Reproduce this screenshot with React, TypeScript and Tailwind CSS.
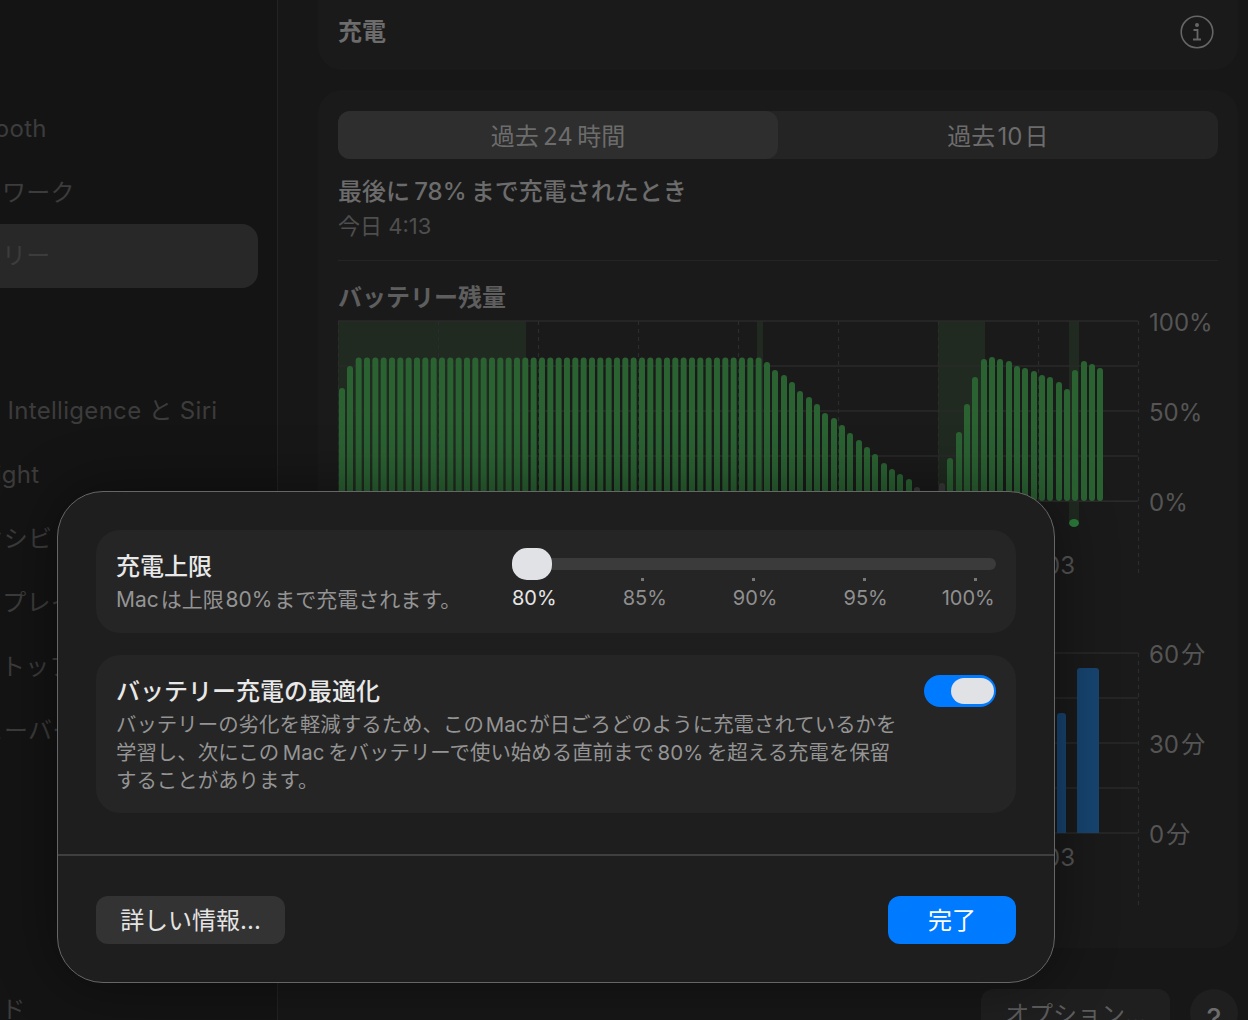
import React from "react";

const font = { fontFamily: '"Inter","Noto Sans CJK JP","Noto Sans",sans-serif' };

const tops: [number, number, string?][] = [
  [342, 388], [350, 366],
  ...Array.from({ length: 49 }, (_, i) => [342 + (i + 2) * 8.333, 357.5] as [number, number]),
  [767, 362], [775, 370], [784, 375], [792, 382], [800, 391], [809, 397], [817, 404], [825, 413], [834, 418], [842, 425],
  [850, 433], [859, 440], [867, 447], [875, 454], [884, 463], [892, 469], [900, 474], [909, 479], [917, 487, "#3a3a3a"],
  [942, 483, "#3a3a3a"], [950, 458], [959, 432], [967, 404], [975, 377], [984, 359], [992, 357], [1000, 359], [1009, 361],
  [1017, 366], [1025, 368], [1034, 371], [1042, 375], [1050, 377], [1059, 382], [1067, 389], [1075, 370], [1084, 361], [1092, 364], [1100, 368],
];

function Grid({ ys, bottom }: { ys: number[]; bottom: number }) {
  return (
    <>
      {ys.map((y) => (
        <line key={y} x1={0} x2={800} y1={y} y2={y} stroke="#2a2a2a" strokeWidth={1.5} />
      ))}
      {[0, 100, 200, 300, 400, 500, 600, 700, 800].map((x) => (
        <line key={x} x1={x + 0.5} x2={x + 0.5} y1={1} y2={bottom} stroke="#2c2c2c" strokeWidth={1.2} strokeDasharray="4 4" />
      ))}
    </>
  );
}

function BatteryChart() {
  return (
    <svg width={802} height={258} className="block shrink-0">
      <g fill="#202a20">
        <rect x={0} y={1} width={188} height={180} />
        <rect x={419} y={1} width={6} height={180} />
        <rect x={600} y={1} width={47} height={180} />
        <rect x={731} y={1} width={10} height={200} />
      </g>
      <Grid ys={[1, 46, 91, 136, 181]} bottom={257} />
      {tops.map(([x, y, c], i) => (
        <rect key={i} x={x - 338 - 3} y={y - 320} width={6} height={501 - y} rx={3} fill={c ?? "#2a6232"} />
      ))}
      <rect x={0} y={181} width={800} height={1} fill="#2a2a2a" />
      <ellipse cx={736} cy={203} rx={5} ry={4} fill="#2a7a3a" />
      <text x={707} y={254} fontSize={24} fill="#555555">03</text>
    </svg>
  );
}

function UsageChart() {
  return (
    <svg width={802} height={256} className="block shrink-0">
      <Grid ys={[1, 46, 91, 136, 181]} bottom={255} />
      <path d="M719 181V64a3 3 0 0 1 3-3h3a3 3 0 0 1 3 3v117z" fill="#17446f" />
      <path d="M739 181V19a3 3 0 0 1 3-3h16a3 3 0 0 1 3 3v162z" fill="#17446f" />
      <text x={707} y={214} fontSize={24} fill="#555555">03</text>
    </svg>
  );
}

function Side({ t, ml, sel }: { t: string; ml: string; sel?: boolean }) {
  return (
    <div className={`flex h-[64px] w-[258px] shrink-0 items-center overflow-hidden rounded-r-[16px] ${sel ? "bg-[#282828]" : ""}`}>
      <span className={`whitespace-nowrap text-[24px] tracking-[0.3px] text-[#3c3c3c] ${ml}`}>{t}</span>
    </div>
  );
}

export default function App() {
  return (
    <div style={font} className="relative flex h-[1020px] w-[1248px] overflow-hidden bg-[#171717]">
      <aside className="flex w-[278px] shrink-0 flex-col overflow-hidden border-r border-[#232323] bg-[#141414] pt-[97px]">
        <Side t="Bluetooth" ml="ml-[-64px]" />
        <div className="-mb-[1px] shrink-0"><Side t="ネットワーク" ml="ml-[-71px]" /></div>
        <Side t="バッテリー" ml="ml-[-71px]" sel />
        <div className="mt-[91px] shrink-0"><Side t={"Apple\u2002Intelligence と Siri"} ml="ml-[-72px]" /></div>
        <Side t="Spotlight" ml="ml-[-64px]" />
        <Side t="アクセシビリティ" ml="ml-[-68px]" />
        <Side t="ディスプレイ" ml="ml-[-69px]" />
        <Side t="デスクトップとDock" ml="ml-[-72px]" />
        <Side t="メニューバー" ml="ml-[-69px]" />
        <div className="mt-[215px] shrink-0"><Side t="キーボード" ml="ml-[-96px]" /></div>
      </aside>

      <main className="flex w-[960px] flex-col pl-[40px]">
        <div className="flex h-[70px] shrink-0 items-center justify-between rounded-b-[24px] bg-[#1a1a1a] pl-[20px] pr-[24px] pb-[6px]">
          <span className="text-[24px] font-semibold text-[#6c6c6c]">充電</span>
          <svg width={34} height={34} viewBox="0 0 34 34" fill="none" className="text-[#666666]">
            <circle cx={17} cy={17} r={15.8} stroke="currentColor" strokeWidth={1.6} />
            <circle cx={17} cy={10} r={2} fill="currentColor" />
            <path d="M13.5 15h4v9M13 24.5h8" stroke="currentColor" strokeWidth={1.8} />
          </svg>
        </div>

        <section className="mt-[20px] flex h-[858px] shrink-0 flex-col overflow-hidden rounded-[24px] bg-[#1a1a1a] px-[20px] pt-[21px]">
          <div className="flex h-[48px] shrink-0 rounded-[12px] bg-[#242424] text-[24px] text-[#6c6c6c]">
            <div className="flex w-[440px] items-center justify-center rounded-[12px] bg-[#2e2e2e] pt-[3px]">{"過去\u200924\u2009時間"}</div>
            <div className="flex flex-1 items-center justify-center pt-[3px]">{"過去\u200a10\u200a日"}</div>
          </div>
          <div className="mt-[16px] text-[24px] font-medium leading-[34px] text-[#6c6c6c]">{"最後に\u200978%\u2009まで充電されたとき"}</div>
          <div className="text-[22px] leading-[34px] text-[#4e4e4e]">今日 4:13</div>
          <div className="mt-[17px] h-px w-full shrink-0 bg-[#242424]" />
          <div className="mt-[20px] text-[24px] font-bold leading-[34px] text-[#5e5e5e]">バッテリー残量</div>
          <div className="mt-[5px] flex shrink-0 gap-[9px]">
            <BatteryChart />
            <div className="text-[24px] text-[#555555]">
              <div className="-mt-[14px] h-[90px] leading-[34px]">100%</div>
              <div className="h-[90px] leading-[34px]">50%</div>
              <div className="h-[90px] leading-[34px]">0%</div>
            </div>
          </div>
          <div className="mt-[74px] flex shrink-0 gap-[9px]">
            <UsageChart />
            <div className="text-[24px] text-[#555555]">
              <div className="-mt-[14px] h-[90px] leading-[34px]">{"60\u200a分"}</div>
              <div className="h-[90px] leading-[34px]">{"30\u200a分"}</div>
              <div className="h-[90px] leading-[34px]">{"0\u200a分"}</div>
            </div>
          </div>
        </section>

        <div className="mt-[41px] flex shrink-0 justify-end gap-[20px]">
          <div className="flex h-[56px] w-[189px] justify-center rounded-[12px] bg-[#1f1f1f] pt-[8px] text-[24px] text-[#5c5c5c]">オプション...</div>
          <div className="flex h-[48px] w-[48px] items-center justify-center rounded-full bg-[#1f1f1f] pt-[12px] text-[28px] font-medium text-[#6c6c6c]">?</div>
        </div>
      </main>

      <div className="absolute left-[57px] top-[491px] flex h-[492px] w-[998px] flex-col rounded-[46px] border-[1.5px] border-[#666666] bg-[#1e1e1e] shadow-[0_0_60px_rgba(0,0,0,0.45)]">
        <div className="flex flex-col gap-[22px] px-[38px] pt-[38px]">
          <div className="flex h-[103px] rounded-[24px] bg-[#252525] pl-[20px] pr-[20px]">
            <div className="w-[396px] shrink-0 pt-[20px]">
              <div className="text-[24px] font-medium leading-[34px] text-[#e8e8e8]">充電上限</div>
              <div className="whitespace-nowrap text-[21px] leading-[32px] text-[#949494]">{"Mac\u200aは上限\u200a80%\u200aまで充電されます。"}</div>
            </div>
            <div className="relative min-w-0 flex-1 pt-[28px]">
              <div className="h-[12px] rounded-full bg-[#3b3b3b]" />
              <div className="absolute left-0 top-[18px] h-[32px] w-[40px] rounded-[15px] bg-[#e0e2e6]" />
              <div className="mt-[8px] flex gap-[108px] pl-[129px]">
                <span className="h-[3px] w-[3px] bg-[#777777]" />
                <span className="h-[3px] w-[3px] bg-[#777777]" />
                <span className="h-[3px] w-[3px] bg-[#777777]" />
                <span className="h-[3px] w-[3px] bg-[#777777]" />
              </div>
              <div className="mt-[2px] flex gap-[66px] text-[20px] leading-[30px] text-[#8f8f8f]">
                <span className="text-[#e6e6e6]">80%</span>
                <span>85%</span>
                <span>90%</span>
                <span>95%</span>
                <span className="ml-[-12px]">100%</span>
              </div>
            </div>
          </div>

          <div className="flex h-[158px] justify-between rounded-[24px] bg-[#252525] pl-[20px] pr-[20px] pt-[20px]">
            <div className="w-[790px]">
              <div className="text-[24px] font-medium leading-[34px] text-[#e8e8e8]">バッテリー充電の最適化</div>
              <div className="mt-[2px] text-[20.45px] leading-[28px] text-[#949494]">
                <div className="whitespace-nowrap">{"バッテリーの劣化を軽減するため、この\u200aMac\u200aが日ごろどのように充電されているかを"}</div>
                <div className="whitespace-nowrap">{"学習し、次にこの\u2009Mac\u2009をバッテリーで使い始める直前まで\u200980%\u2009を超える充電を保留"}</div>
                <div className="whitespace-nowrap">することがあります。</div>
              </div>
            </div>
            <div className="flex h-[32px] w-[72px] items-center justify-end rounded-full bg-[#007aff] pr-[2px]">
              <div className="h-[26px] w-[43px] rounded-full bg-[#e0e2e6]" />
            </div>
          </div>
        </div>

        <div className="mt-[41px] h-[1.5px] w-full bg-[#3f3f3f]" />

        <div className="flex justify-between px-[38px] pt-[40px]">
          <div className="flex h-[48px] w-[189px] items-center justify-center rounded-[12px] bg-[#333333] pt-[3px] text-[24px] text-[#e4e4e4]">詳しい情報...</div>
          <div className="flex h-[48px] w-[128px] items-center justify-center rounded-[12px] bg-[#007aff] pt-[3px] text-[24px] text-[#ffffff]">完了</div>
        </div>
      </div>
    </div>
  );
}
